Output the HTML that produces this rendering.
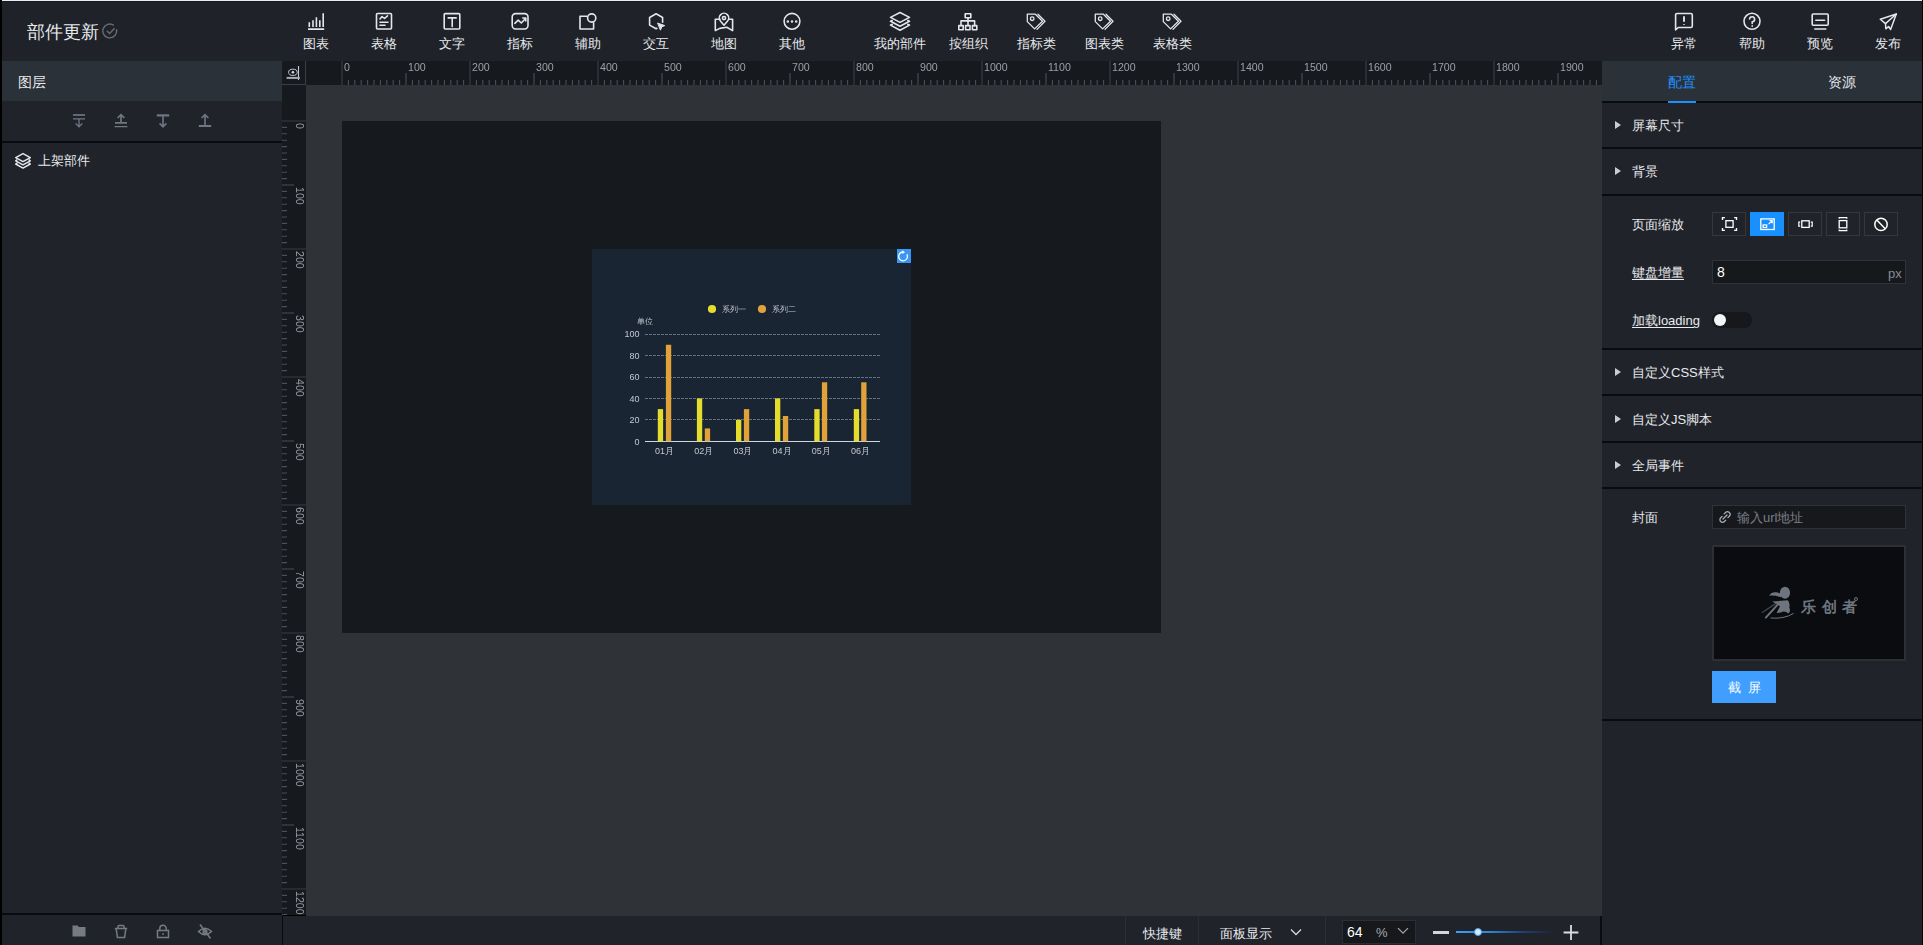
<!DOCTYPE html>
<html><head><meta charset="utf-8">
<style>
*{box-sizing:border-box;margin:0;padding:0}
html,body{width:1923px;height:945px;overflow:hidden;background:#000}
body{position:relative;font-family:"Liberation Sans",sans-serif;color:#e6e8eb}
.a{position:absolute}
#topline{left:2px;top:0;width:1920px;height:1px;background:#ececec}
#topbar{left:2px;top:1px;width:1920px;height:60px;background:#1f2229;border-top:1px solid #171a20}
#lp{left:2px;top:61px;width:280px;height:884px;background:#20232a}
#rp{left:1602px;top:61px;width:320px;height:884px;background:#20232a}
#canvas{left:306px;top:85px;width:1296px;height:831px;background:#2f3237}
#corner{left:282px;top:61px;width:24px;height:24px;background:#16191d}
#hr{left:306px;top:61px;width:1296px;height:24px;background:#16191d}
#vr{left:282px;top:85px;width:24px;height:830px;background:#16191d}
#screen{left:342px;top:121px;width:819px;height:512px;background:#16191e}
#chart{left:592px;top:249px;width:319px;height:256px;background:#1a2533}
#bb{left:283px;top:916px;width:1319px;height:29px;background:#20232a}

.tb{position:absolute;top:0;width:68px;height:61px;text-align:center;color:#e8eaed}
.tb svg{position:absolute;left:25px;top:12px;width:18px;height:18px;overflow:visible}
.tb span{position:absolute;left:0;width:68px;top:36px;font-size:13px;line-height:16px;white-space:nowrap}
.ic{fill:none;stroke:#e3e6ea;stroke-width:1.6;stroke-linejoin:round;stroke-linecap:round}
</style></head><body>
<div class="a" id="topline"></div>
<div class="a" id="topbar"></div>
<div class="a" style="left:27px;top:20px;font-size:18px;line-height:24px;color:#e8eaed;white-space:nowrap">部件更新</div>
<svg class="a" style="left:102px;top:23px;width:16px;height:16px" viewBox="0 0 16 16"><path d="M14.4 6.2A6.9 6.9 0 1 1 11.8 2.4" fill="none" stroke="#676c73" stroke-width="1.4"/><path d="M4.8 7.8L7.6 10.4L12.6 5.2" fill="none" stroke="#676c73" stroke-width="1.4"/></svg>
<div class="tb" style="left:282px"><svg viewBox="0 0 18 18" class="ic" style="stroke-linecap:butt"><path d="M1 17.1H17.2M2.3 15V10.3M6 15V8.3M9.4 15V5.3M12.8 15V8.3M16.2 15V1.3" /></svg><span>图表</span></div>
<div class="tb" style="left:350px"><svg viewBox="0 0 18 18" class="ic"><rect x="1.5" y="1.5" width="15" height="15.5" rx="1"/><path d="M5 7L7 4.5L9.5 6.5L12.5 3.8M5 10.2H13M5 13.2H10"/></svg><span>表格</span></div>
<div class="tb" style="left:418px"><svg viewBox="0 0 18 18" class="ic"><rect x="1.2" y="1.6" width="15.6" height="15.4" rx="1"/><path d="M5.2 5.9H13.2M9.2 5.9V14.6"/></svg><span>文字</span></div>
<div class="tb" style="left:486px"><svg viewBox="0 0 18 18" class="ic"><rect x="1.2" y="1.6" width="15.8" height="15.4" rx="3.4"/><path d="M3.8 11.3L7.2 8.2L10.3 11L14.8 6.2M11.8 6H14.8V9"/></svg><span>指标</span></div>
<div class="tb" style="left:554px"><svg viewBox="0 0 18 18" class="ic"><path d="M7.8 4.2H1V17H14.6V10.6"/><circle cx="12.7" cy="6" r="4.1"/></svg><span>辅助</span></div>
<div class="tb" style="left:622px"><svg viewBox="0 0 18 18" class="ic"><path d="M15.6 10.2V5.5L9.1 1.8L2.6 5.5V13.1L9.1 16.8L9.9 16.3"/><path d="M10.9 11.2L17.8 13.6L14.8 14.8L13.6 17.8Z" fill="#e3e6ea" stroke-width="1"/></svg><span>交互</span></div>
<div class="tb" style="left:690px"><svg viewBox="0 0 18 18" class="ic"><path d="M5 7.3H0.3V18.6L4.8 16.4L11.8 15.2L17.6 18.6V7.3H14.4"/><path d="M9 13.2L5.6 9.2A4.7 4.7 0 1 1 12.4 9.2Z"/><circle cx="9" cy="6.1" r="1.6"/></svg><span>地图</span></div>
<div class="tb" style="left:758px"><svg viewBox="0 0 18 18" class="ic"><circle cx="9" cy="9.3" r="7.9"/><circle cx="4.8" cy="9.5" r=".5" fill="#e3e6ea"/><circle cx="9" cy="9.5" r=".5" fill="#e3e6ea"/><circle cx="13.2" cy="9.5" r=".5" fill="#e3e6ea"/></svg><span>其他</span></div>
<div class="tb" style="left:866px"><svg viewBox="0 0 20 18" class="ic" style="width:20px;left:24px"><path d="M10 0.5L19.5 5.4L10 10.4L0.5 5.4Z"/><path d="M2.2 8.6L0.5 9.3L10 14.3L19.5 9.3L17.8 8.6M2.2 12.4L0.5 13.1L10 18.3L19.5 13.1L17.8 12.4"/></svg><span>我的部件</span></div>
<div class="tb" style="left:934px"><svg viewBox="0 0 20 18" class="ic" style="width:20px;left:24px"><rect x="7.2" y="1.7" width="5.6" height="4"/><rect x="0.8" y="13.6" width="4.4" height="4.2"/><rect x="7.6" y="13.6" width="4.4" height="4.2"/><rect x="14.4" y="13.6" width="4.4" height="4.2"/><path d="M10 5.7V13.6M3 13.6V8.9H16.6V13.6"/></svg><span>按组织</span></div>
<div class="tb" style="left:1002px"><svg viewBox="0 0 18 18" class="ic" style="stroke-width:1.3"><path d="M0.3 2.2H8.4L15.5 9.3L7.6 16.9L0.3 9.6Z"/><path d="M11 2.2L18 9.3L10 17.4"/><circle cx="5.2" cy="6.7" r="1.8"/></svg><span>指标类</span></div>
<div class="tb" style="left:1070px"><svg viewBox="0 0 18 18" class="ic" style="stroke-width:1.3"><path d="M0.3 2.2H8.4L15.5 9.3L7.6 16.9L0.3 9.6Z"/><path d="M11 2.2L18 9.3L10 17.4"/><circle cx="5.2" cy="6.7" r="1.8"/></svg><span>图表类</span></div>
<div class="tb" style="left:1138px"><svg viewBox="0 0 18 18" class="ic" style="stroke-width:1.3"><path d="M0.3 2.2H8.4L15.5 9.3L7.6 16.9L0.3 9.6Z"/><path d="M11 2.2L18 9.3L10 17.4"/><circle cx="5.2" cy="6.7" r="1.8"/></svg><span>表格类</span></div>
<div class="tb" style="left:1650px"><svg viewBox="0 0 18 18" class="ic"><path d="M0.6 17.8V3A1.5 1.5 0 0 1 2.1 1.5H15.8A1.5 1.5 0 0 1 17.3 3V14A1.5 1.5 0 0 1 15.8 15.5H3.2Z"/><path d="M9 4.2V9.8M9 12.2V13" stroke-width="1.9" stroke-linecap="butt"/></svg><span>异常</span></div>
<div class="tb" style="left:1718px"><svg viewBox="0 0 18 18" class="ic"><circle cx="9" cy="9.3" r="8"/><path d="M6.6 7A2.5 2.5 0 1 1 9.2 9.7V11.4M9.2 13.9V14.2"/></svg><span>帮助</span></div>
<div class="tb" style="left:1786px"><svg viewBox="0 0 18 18" class="ic"><rect x="1.2" y="2" width="16" height="11.3" rx="1"/><path d="M4.8 8.2H13.6M3.8 17H14.8"/></svg><span>预览</span></div>
<div class="tb" style="left:1854px"><svg viewBox="0 0 18 18" class="ic" style="stroke-width:1.5"><path d="M17.3 2L1.3 7.2L6.5 11.6L6.8 16.8L9.6 14.5L11.6 17.5Z"/><path d="M6.5 11.6L17.3 2"/></svg><span>发布</span></div>

<div class="a" id="lp"></div>
<div class="a" style="left:2px;top:61px;width:280px;height:40px;background:#2b3139"></div>
<div class="a" style="left:18px;top:73px;font-size:14px;line-height:18px;color:#e8eaed">图层</div>
<div class="a" style="left:2px;top:141px;width:280px;height:2px;background:#0a0b0e"></div>
<svg class="a" style="left:70px;top:112px;width:144px;height:18px" viewBox="0 0 144 18" fill="none" stroke="#707782" stroke-width="1.6">
<path d="M3 3H15" stroke-width="1.7"/><path d="M3 6.8H15M9 6.8V14.6M5.6 11.4L9 14.8L12.4 11.4" stroke-width="1.3"/>
<path d="M45 10.8H57M51 10.8V2.8M47.6 6L51 2.6L54.4 6" stroke-width="1.7"/><path d="M44.6 14.6H57.4" stroke-width="1.3"/>
<path d="M93 4V14.6M89.6 11.4L93 14.8L96.4 11.4" />
<path d="M86.8 3.4H99.2" stroke-width="2.2"/>
<path d="M135 14V2.8M131.6 6L135 2.6L138.4 6"/>
<path d="M128.8 14H141.2" stroke-width="2"/>
</svg>
<svg class="a" style="left:14px;top:152px;width:18px;height:18px" viewBox="0 0 18 18" fill="none" stroke="#e3e6ea" stroke-width="1.5" stroke-linejoin="round">
<path d="M9 1.6L16.3 5.6L9 9.6L1.7 5.6Z"/><path d="M3.4 7.6L1.7 8.8L9 12.8L16.3 8.8L14.6 7.6M3.4 10.8L1.7 12L9 16.1L16.3 12L14.6 10.8"/>
</svg>
<div class="a" style="left:38px;top:152px;font-size:13px;line-height:17px;color:#e8eaed">上架部件</div>
<div class="a" style="left:2px;top:913px;width:280px;height:2px;background:#0a0b0e"></div>
<svg class="a" style="left:70px;top:922px;width:144px;height:18px" viewBox="0 0 144 18" fill="#767b83" stroke="#767b83" stroke-width="1.5">
<path d="M2.5 3.5H7.5L9 5H15.5V14.5H2.5Z" stroke="none"/>
<path d="M44.8 6.6H57.2M46.2 7L47.4 15.4H54.6L55.8 7M48 6.4V4.4Q48 3.4 49 3.4H53Q54 3.4 54 4.4V6.4" fill="none"/>
<path d="M87.5 8.5H98.5V15.5H87.5ZM89.8 8.5V6.5A3.2 3.2 0 0 1 96.2 6.5V8.5" fill="none"/>
<rect x="92.4" y="11" width="1.3" height="2" stroke="none"/>
<path d="M128.5 9.5Q135 3 141.5 9.5Q135 16 128.5 9.5Z" fill="none"/>
<circle cx="135" cy="9.5" r="1.8" fill="none"/>
<path d="M130 2.5L140.5 16.5" fill="none"/>
</svg>

<div class="a" id="rp"></div>
<div class="a" style="left:1602px;top:61px;width:320px;height:40px;background:#2b3139"></div>
<div class="a" style="left:1668px;top:73px;font-size:14px;line-height:18px;color:#1f90fb">配置</div>
<div class="a" style="left:1828px;top:73px;font-size:14px;line-height:18px;color:#e8eaed">资源</div>
<div class="a" style="left:1602px;top:101px;width:320px;height:2px;background:#0a0b0e"></div>
<div class="a" style="left:1668px;top:101px;width:28px;height:2px;background:#1e90ff"></div>
<div class="a" style="left:1602px;top:147px;width:320px;height:2px;background:#0a0b0e"></div>
<div class="a" style="left:1602px;top:194px;width:320px;height:2px;background:#0a0b0e"></div>
<div class="a" style="left:1602px;top:348px;width:320px;height:2px;background:#0a0b0e"></div>
<div class="a" style="left:1602px;top:394px;width:320px;height:2px;background:#0a0b0e"></div>
<div class="a" style="left:1602px;top:441px;width:320px;height:2px;background:#0a0b0e"></div>
<div class="a" style="left:1602px;top:487px;width:320px;height:2px;background:#0a0b0e"></div>
<div class="a" style="left:1602px;top:719px;width:320px;height:2px;background:#0a0b0e"></div>
<svg class="a" style="left:1614px;top:120px;width:8px;height:10px" viewBox="0 0 8 10"><path d="M1 1L7 5L1 9Z" fill="#c9cdd2"/></svg>
<div class="a" style="left:1632px;top:117px;font-size:13px;line-height:17px;color:#e8eaed;white-space:nowrap">屏幕尺寸</div>
<svg class="a" style="left:1614px;top:166px;width:8px;height:10px" viewBox="0 0 8 10"><path d="M1 1L7 5L1 9Z" fill="#c9cdd2"/></svg>
<div class="a" style="left:1632px;top:163px;font-size:13px;line-height:17px;color:#e8eaed;white-space:nowrap">背景</div>
<svg class="a" style="left:1614px;top:367px;width:8px;height:10px" viewBox="0 0 8 10"><path d="M1 1L7 5L1 9Z" fill="#c9cdd2"/></svg>
<div class="a" style="left:1632px;top:364px;font-size:13px;line-height:17px;color:#e8eaed;white-space:nowrap">自定义CSS样式</div>
<svg class="a" style="left:1614px;top:413.5px;width:8px;height:10px" viewBox="0 0 8 10"><path d="M1 1L7 5L1 9Z" fill="#c9cdd2"/></svg>
<div class="a" style="left:1632px;top:410.5px;font-size:13px;line-height:17px;color:#e8eaed;white-space:nowrap">自定义JS脚本</div>
<svg class="a" style="left:1614px;top:460px;width:8px;height:10px" viewBox="0 0 8 10"><path d="M1 1L7 5L1 9Z" fill="#c9cdd2"/></svg>
<div class="a" style="left:1632px;top:457px;font-size:13px;line-height:17px;color:#e8eaed;white-space:nowrap">全局事件</div>
<div class="a" style="left:1632px;top:216px;font-size:13px;line-height:17px;color:#e8eaed">页面缩放</div>
<div class="a" style="left:1632px;top:264px;font-size:13px;line-height:17px;color:#e8eaed;text-decoration:underline;text-underline-offset:2px">键盘增量</div>
<div class="a" style="left:1632px;top:312px;font-size:13px;line-height:17px;color:#e8eaed;text-decoration:underline;text-underline-offset:2px">加载loading</div>
<div class="a" style="left:1712px;top:212px;width:34px;height:24px;border:1px solid #34373d"></div>
<div class="a" style="left:1750px;top:212px;width:34px;height:24px;background:#1890ff"></div>
<div class="a" style="left:1788px;top:212px;width:34px;height:24px;border:1px solid #34373d"></div>
<div class="a" style="left:1826px;top:212px;width:34px;height:24px;border:1px solid #34373d"></div>
<div class="a" style="left:1864px;top:212px;width:34px;height:24px;border:1px solid #34373d"></div>
<svg class="a" style="left:1712px;top:212px;width:186px;height:24px" viewBox="0 0 186 24" fill="none" stroke="#fff" stroke-width="1.4">
<path d="M10.5 8V5.6H12.9M22.1 5.6H24.5V8M24.5 16V18.4H22.1M12.9 18.4H10.5V16"/>
<rect x="13.9" y="8.7" width="7.2" height="6.6" stroke-width="1.3"/>
<rect x="48.8" y="6.9" width="13.4" height="10.6" stroke-width="1.3"/>
<rect x="51.1" y="12.9" width="3.6" height="2.6" stroke-width="1.2"/>
<path d="M56.6 12.2L60 8.8M57.4 8.5H60.2V11.3" stroke-width="1.2"/>
<rect x="89.8" y="8.8" width="7.4" height="6.6" stroke-width="1.3"/>
<path d="M88.2 10.2H86.8V14.2H88.2M98.8 10.2H100.2V14.2H98.8" stroke-width="1.2"/>
<rect x="127.2" y="8.6" width="7.6" height="7.2" stroke-width="1.3"/>
<path d="M127.2 6.8V5.6H134.8V6.8M127.2 17.4V18.6H134.8V17.4" stroke-width="1.2"/>
<circle cx="169" cy="12.4" r="6.2" stroke-width="1.5"/>
<path d="M164.8 8L173.2 16.8" stroke-width="1.5"/>
</svg>
<div class="a" style="left:1712px;top:260px;width:194px;height:24px;background:#16181c;border:1px solid #2f3338"></div>
<div class="a" style="left:1717px;top:263px;font-size:14px;line-height:18px;color:#fff">8</div>
<div class="a" style="left:1888px;top:265px;font-size:13px;line-height:17px;color:#868c94">px</div>
<div class="a" style="left:1712px;top:312px;width:40px;height:16px;border-radius:8px;background:#16181c"></div>
<div class="a" style="left:1714px;top:314px;width:12px;height:12px;border-radius:6px;background:#f2f6fa"></div>
<div class="a" style="left:1632px;top:509px;font-size:13px;line-height:17px;color:#e8eaed">封面</div>
<div class="a" style="left:1712px;top:505px;width:194px;height:24px;background:#16181c;border:1px solid #2f3338"></div>
<svg class="a" style="left:1718px;top:510px;width:14px;height:14px" viewBox="0 0 14 14" fill="none" stroke="#a8adb4" stroke-width="1.3" stroke-linecap="round">
<path d="M6.2 3.9L7.6 2.5A2.6 2.6 0 0 1 11.3 6.2L9.9 7.6M7.8 10.1L6.4 11.5A2.6 2.6 0 0 1 2.7 7.8L4.1 6.4M5 9L9 5"/>
</svg>
<div class="a" style="left:1737px;top:509px;font-size:13px;line-height:17px;color:#7a7f87;white-space:nowrap">输入url地址</div>
<div class="a" style="left:1712px;top:545px;width:194px;height:116px;background:#0b0c0f;border:2px solid #2c2f34"></div>
<svg class="a" style="left:1755px;top:582px;width:45px;height:42px" viewBox="0 0 45 42" fill="#6e757e">
<ellipse cx="30" cy="10.8" rx="5.1" ry="6"/>
<path d="M14 13.6Q16.5 9.6 21.5 10.3L26.5 11.5L26 15.2Q20 13.2 14 13.6Z"/>
<path d="M17 19.6L32.8 18.3Q35.6 21.5 34.2 25.5Q36.2 28.8 33.4 31.6L31.5 30.2Q28.5 28.8 26 30.6L21.6 31L25 24.2Q21 21.5 17 19.6Z"/>
<path d="M10.8 35.6L24.5 20.6" stroke="#6e757e" stroke-width="1.9" stroke-linecap="round"/>
<path d="M6.8 30.8L22.2 20.6" stroke="#6e757e" stroke-width="1.3" opacity=".55"/>
<path d="M15.5 36Q29 37.2 38.6 31.4" stroke="#6e757e" stroke-width="1" fill="none"/>
</svg>
<div class="a" style="left:1801px;top:597px;font-size:15px;line-height:20px;color:#6e757e;letter-spacing:5.5px;font-weight:bold;white-space:nowrap">乐创者</div>
<div class="a" style="left:1854px;top:597px;width:4px;height:4px;border-radius:2px;border:1px solid #6e757e"></div>
<div class="a" style="left:1712px;top:671px;width:64px;height:32px;background:#409eff;color:#fff;font-size:13px;line-height:34px;text-align:center;letter-spacing:7px;text-indent:7px">截屏</div>

<div class="a" id="canvas"></div>
<div class="a" id="corner"></div>
<div class="a" style="left:282px;top:61px;width:24px;height:24px;border-right:1px solid #3c4046;border-bottom:1px solid #3c4046"></div>
<svg class="a" style="left:282px;top:61px;width:24px;height:24px" viewBox="0 0 24 24" fill="none" stroke="#c5c9ce">
<ellipse cx="10.9" cy="11.3" rx="4.3" ry="3.1" stroke-width="1"/><circle cx="10.9" cy="11.3" r="1.3" fill="#d8dde2" stroke="none"/><path d="M16.5 5V19" stroke-width="1.1"/><path d="M4.6 16.9H17.8" stroke-width="2" stroke="#a9adb3"/>
</svg>
<div class="a" id="hr"></div>
<svg class="a" style="left:306px;top:61px;width:1296px;height:24px;will-change:transform" viewBox="0 0 1296 24">
<path d="M36.00 0V24M164.00 0V24M292.00 0V24M420.00 0V24M548.00 0V24M676.00 0V24M804.00 0V24M932.00 0V24M1060.00 0V24M1188.00 0V24" stroke="#3a3d43" stroke-width="1.2"/>
<path d="M42.40 19V24M48.80 19V24M55.20 19V24M61.60 19V24M68.00 19V24M74.40 19V24M80.80 19V24M87.20 19V24M93.60 19V24M100.00 12V24M106.40 19V24M112.80 19V24M119.20 19V24M125.60 19V24M132.00 19V24M138.40 19V24M144.80 19V24M151.20 19V24M157.60 19V24M170.40 19V24M176.80 19V24M183.20 19V24M189.60 19V24M196.00 19V24M202.40 19V24M208.80 19V24M215.20 19V24M221.60 19V24M228.00 12V24M234.40 19V24M240.80 19V24M247.20 19V24M253.60 19V24M260.00 19V24M266.40 19V24M272.80 19V24M279.20 19V24M285.60 19V24M298.40 19V24M304.80 19V24M311.20 19V24M317.60 19V24M324.00 19V24M330.40 19V24M336.80 19V24M343.20 19V24M349.60 19V24M356.00 12V24M362.40 19V24M368.80 19V24M375.20 19V24M381.60 19V24M388.00 19V24M394.40 19V24M400.80 19V24M407.20 19V24M413.60 19V24M426.40 19V24M432.80 19V24M439.20 19V24M445.60 19V24M452.00 19V24M458.40 19V24M464.80 19V24M471.20 19V24M477.60 19V24M484.00 12V24M490.40 19V24M496.80 19V24M503.20 19V24M509.60 19V24M516.00 19V24M522.40 19V24M528.80 19V24M535.20 19V24M541.60 19V24M554.40 19V24M560.80 19V24M567.20 19V24M573.60 19V24M580.00 19V24M586.40 19V24M592.80 19V24M599.20 19V24M605.60 19V24M612.00 12V24M618.40 19V24M624.80 19V24M631.20 19V24M637.60 19V24M644.00 19V24M650.40 19V24M656.80 19V24M663.20 19V24M669.60 19V24M682.40 19V24M688.80 19V24M695.20 19V24M701.60 19V24M708.00 19V24M714.40 19V24M720.80 19V24M727.20 19V24M733.60 19V24M740.00 12V24M746.40 19V24M752.80 19V24M759.20 19V24M765.60 19V24M772.00 19V24M778.40 19V24M784.80 19V24M791.20 19V24M797.60 19V24M810.40 19V24M816.80 19V24M823.20 19V24M829.60 19V24M836.00 19V24M842.40 19V24M848.80 19V24M855.20 19V24M861.60 19V24M868.00 12V24M874.40 19V24M880.80 19V24M887.20 19V24M893.60 19V24M900.00 19V24M906.40 19V24M912.80 19V24M919.20 19V24M925.60 19V24M938.40 19V24M944.80 19V24M951.20 19V24M957.60 19V24M964.00 19V24M970.40 19V24M976.80 19V24M983.20 19V24M989.60 19V24M996.00 12V24M1002.40 19V24M1008.80 19V24M1015.20 19V24M1021.60 19V24M1028.00 19V24M1034.40 19V24M1040.80 19V24M1047.20 19V24M1053.60 19V24M1066.40 19V24M1072.80 19V24M1079.20 19V24M1085.60 19V24M1092.00 19V24M1098.40 19V24M1104.80 19V24M1111.20 19V24M1117.60 19V24M1124.00 12V24M1130.40 19V24M1136.80 19V24M1143.20 19V24M1149.60 19V24M1156.00 19V24M1162.40 19V24M1168.80 19V24M1175.20 19V24M1181.60 19V24M1194.40 19V24M1200.80 19V24M1207.20 19V24M1213.60 19V24M1220.00 19V24M1226.40 19V24M1232.80 19V24M1239.20 19V24M1245.60 19V24M1252.00 12V24M1258.40 19V24M1264.80 19V24M1271.20 19V24M1277.60 19V24M1284.00 19V24M1290.40 19V24" stroke="#4a4e55" stroke-width="1.1"/>
<g fill="#9ba0a7" font-size="10.6" font-family="Liberation Sans"><text x="38.00" y="10.2">0</text><text x="102.00" y="10.2">100</text><text x="166.00" y="10.2">200</text><text x="230.00" y="10.2">300</text><text x="294.00" y="10.2">400</text><text x="358.00" y="10.2">500</text><text x="422.00" y="10.2">600</text><text x="486.00" y="10.2">700</text><text x="550.00" y="10.2">800</text><text x="614.00" y="10.2">900</text><text x="678.00" y="10.2">1000</text><text x="742.00" y="10.2">1100</text><text x="806.00" y="10.2">1200</text><text x="870.00" y="10.2">1300</text><text x="934.00" y="10.2">1400</text><text x="998.00" y="10.2">1500</text><text x="1062.00" y="10.2">1600</text><text x="1126.00" y="10.2">1700</text><text x="1190.00" y="10.2">1800</text><text x="1254.00" y="10.2">1900</text></g>
</svg>
<div class="a" id="vr"></div>
<svg class="a" style="left:282px;top:85px;width:24px;height:830px;will-change:transform" viewBox="0 0 24 830">
<path d="M0 36.00H24M0 164.00H24M0 292.00H24M0 420.00H24M0 548.00H24M0 676.00H24M0 804.00H24" stroke="#3a3d43" stroke-width="1.2"/>
<path d="M0 42.40H5M0 48.80H5M0 55.20H5M0 61.60H5M0 68.00H5M0 74.40H5M0 80.80H5M0 87.20H5M0 93.60H5M0 100.00H12M0 106.40H5M0 112.80H5M0 119.20H5M0 125.60H5M0 132.00H5M0 138.40H5M0 144.80H5M0 151.20H5M0 157.60H5M0 170.40H5M0 176.80H5M0 183.20H5M0 189.60H5M0 196.00H5M0 202.40H5M0 208.80H5M0 215.20H5M0 221.60H5M0 228.00H12M0 234.40H5M0 240.80H5M0 247.20H5M0 253.60H5M0 260.00H5M0 266.40H5M0 272.80H5M0 279.20H5M0 285.60H5M0 298.40H5M0 304.80H5M0 311.20H5M0 317.60H5M0 324.00H5M0 330.40H5M0 336.80H5M0 343.20H5M0 349.60H5M0 356.00H12M0 362.40H5M0 368.80H5M0 375.20H5M0 381.60H5M0 388.00H5M0 394.40H5M0 400.80H5M0 407.20H5M0 413.60H5M0 426.40H5M0 432.80H5M0 439.20H5M0 445.60H5M0 452.00H5M0 458.40H5M0 464.80H5M0 471.20H5M0 477.60H5M0 484.00H12M0 490.40H5M0 496.80H5M0 503.20H5M0 509.60H5M0 516.00H5M0 522.40H5M0 528.80H5M0 535.20H5M0 541.60H5M0 554.40H5M0 560.80H5M0 567.20H5M0 573.60H5M0 580.00H5M0 586.40H5M0 592.80H5M0 599.20H5M0 605.60H5M0 612.00H12M0 618.40H5M0 624.80H5M0 631.20H5M0 637.60H5M0 644.00H5M0 650.40H5M0 656.80H5M0 663.20H5M0 669.60H5M0 682.40H5M0 688.80H5M0 695.20H5M0 701.60H5M0 708.00H5M0 714.40H5M0 720.80H5M0 727.20H5M0 733.60H5M0 740.00H12M0 746.40H5M0 752.80H5M0 759.20H5M0 765.60H5M0 772.00H5M0 778.40H5M0 784.80H5M0 791.20H5M0 797.60H5M0 810.40H5M0 816.80H5M0 823.20H5M0 829.60H5" stroke="#4a4e55" stroke-width="1.1"/>
<g fill="#9ba0a7" font-size="10.6" font-family="Liberation Sans"><text transform="translate(13.8 38.00) rotate(90)">0</text><text transform="translate(13.8 102.00) rotate(90)">100</text><text transform="translate(13.8 166.00) rotate(90)">200</text><text transform="translate(13.8 230.00) rotate(90)">300</text><text transform="translate(13.8 294.00) rotate(90)">400</text><text transform="translate(13.8 358.00) rotate(90)">500</text><text transform="translate(13.8 422.00) rotate(90)">600</text><text transform="translate(13.8 486.00) rotate(90)">700</text><text transform="translate(13.8 550.00) rotate(90)">800</text><text transform="translate(13.8 614.00) rotate(90)">900</text><text transform="translate(13.8 678.00) rotate(90)">1000</text><text transform="translate(13.8 742.00) rotate(90)">1100</text><text transform="translate(13.8 806.00) rotate(90)">1200</text></g>
</svg>
<div class="a" id="screen"></div>
<div class="a" id="chart"></div>
<svg class="a" style="left:592px;top:249px;width:319px;height:256px;will-change:transform" viewBox="0 0 319 256" font-family="Liberation Sans">
<path d="M53 170.5H288" stroke="#67707c" stroke-width="1" stroke-dasharray="3 1"/>
<path d="M53 149.5H288" stroke="#67707c" stroke-width="1" stroke-dasharray="3 1"/>
<path d="M53 128.5H288" stroke="#67707c" stroke-width="1" stroke-dasharray="3 1"/>
<path d="M53 106.5H288" stroke="#67707c" stroke-width="1" stroke-dasharray="3 1"/>
<path d="M53 85.5H288" stroke="#67707c" stroke-width="1" stroke-dasharray="3 1"/>
<path d="M53 192.5H288" stroke="#cfd6de" stroke-width="1"/>
<text x="47.6" y="195.50" text-anchor="end" font-size="9" fill="#c3c8ce">0</text>
<text x="47.6" y="174.05" text-anchor="end" font-size="9" fill="#c3c8ce">20</text>
<text x="47.6" y="152.60" text-anchor="end" font-size="9" fill="#c3c8ce">40</text>
<text x="47.6" y="131.15" text-anchor="end" font-size="9" fill="#c3c8ce">60</text>
<text x="47.6" y="109.70" text-anchor="end" font-size="9" fill="#c3c8ce">80</text>
<text x="47.6" y="88.25" text-anchor="end" font-size="9" fill="#c3c8ce">100</text>
<rect x="65.80" y="160.12" width="5.3" height="32.17" fill="#e5dd2c"/>
<rect x="73.90" y="95.77" width="5.3" height="96.53" fill="#e2a23a"/>
<text x="72.50" y="205.30" text-anchor="middle" font-size="9" fill="#c3c8ce">01月</text>
<rect x="104.90" y="149.40" width="5.3" height="42.90" fill="#e5dd2c"/>
<rect x="112.80" y="179.43" width="5.3" height="12.87" fill="#e2a23a"/>
<text x="111.70" y="205.30" text-anchor="middle" font-size="9" fill="#c3c8ce">02月</text>
<rect x="144.00" y="170.85" width="5.3" height="21.45" fill="#e5dd2c"/>
<rect x="151.90" y="160.12" width="5.3" height="32.17" fill="#e2a23a"/>
<text x="150.90" y="205.30" text-anchor="middle" font-size="9" fill="#c3c8ce">03月</text>
<rect x="183.00" y="149.40" width="5.3" height="42.90" fill="#e5dd2c"/>
<rect x="190.90" y="166.99" width="5.3" height="25.31" fill="#e2a23a"/>
<text x="190.10" y="205.30" text-anchor="middle" font-size="9" fill="#c3c8ce">04月</text>
<rect x="222.30" y="160.12" width="5.3" height="32.17" fill="#e5dd2c"/>
<rect x="229.90" y="133.31" width="5.3" height="58.99" fill="#e2a23a"/>
<text x="229.30" y="205.30" text-anchor="middle" font-size="9" fill="#c3c8ce">05月</text>
<rect x="261.80" y="160.12" width="5.3" height="32.17" fill="#e5dd2c"/>
<rect x="269.20" y="133.31" width="5.3" height="58.99" fill="#e2a23a"/>
<text x="268.50" y="205.30" text-anchor="middle" font-size="9" fill="#c3c8ce">06月</text>
<text x="45" y="74.60" font-size="8" fill="#c3c8ce">单位</text>
<circle cx="120" cy="60" r="4.1" fill="#e5dd2c"/><circle cx="170" cy="60" r="4.1" fill="#e2a23a"/>
<text x="130.3" y="63.3" font-size="7.5" fill="#c3c8ce">系列一</text><text x="180.3" y="63.3" font-size="7.5" fill="#c3c8ce">系列二</text>
<rect x="305" y="0" width="14" height="14" fill="#3a96f4"/>
<path d="M314.9 5.2A4.4 4.4 0 1 1 310.9 3.0" fill="none" stroke="#fff" stroke-width="1.3"/><path d="M310.2 1.3L313 3.2L310.4 5.0Z" fill="#fff"/>
</svg>
<div class="a" id="bb"></div>
<div class="a" style="left:282px;top:915px;width:1px;height:30px;background:#0a0b0e"></div>
<div class="a" style="left:1125px;top:916px;width:1px;height:29px;background:#2b2e34"></div>
<div class="a" style="left:1198px;top:916px;width:1px;height:29px;background:#2b2e34"></div>
<div class="a" style="left:1325px;top:916px;width:1px;height:29px;background:#2b2e34"></div>
<div class="a" style="left:1600px;top:916px;width:2px;height:29px;background:#0a0b0e"></div>
<div class="a" style="left:1143px;top:925px;font-size:13px;line-height:17px;color:#e8eaed">快捷键</div>
<div class="a" style="left:1220px;top:925px;font-size:13px;line-height:17px;color:#e8eaed">面板显示</div>
<svg class="a" style="left:1288px;top:926px;width:16px;height:12px" viewBox="0 0 16 12" fill="none" stroke="#d5d8dc" stroke-width="1.3"><path d="M3 3.5L8 8.5L13 3.5"/></svg>
<div class="a" style="left:1342px;top:920px;width:74px;height:24px;background:#16181c;border:1px solid #2b2e33"></div>
<div class="a" style="left:1347px;top:923px;font-size:14px;line-height:18px;color:#fff">64</div>
<div class="a" style="left:1376px;top:924px;font-size:13px;line-height:17px;color:#a3a8ae">%</div>
<svg class="a" style="left:1395px;top:925px;width:16px;height:12px" viewBox="0 0 16 12" fill="none" stroke="#a3a8ae" stroke-width="1.2"><path d="M3 3.2L8 8.2L13 3.2"/></svg>
<div class="a" style="left:1433px;top:931px;width:16px;height:2.5px;background:#d3d7dc"></div>
<div class="a" style="left:1456px;top:931px;width:97px;height:2px;background:linear-gradient(90deg,#3c9ff7 0%,#2d86da 35%,#1d3f73 70%,#1d2533 100%)"></div>
<div class="a" style="left:1474px;top:928px;width:8px;height:8px;border-radius:4px;background:#d9e9ff;border:1.5px solid #4aa3f5"></div>
<svg class="a" style="left:1562px;top:924px;width:18px;height:17px" viewBox="0 0 18 17" fill="none" stroke="#dadde1" stroke-width="1.8"><path d="M1.6 8.5H16.4M9 1V16"/></svg>

</body></html>
